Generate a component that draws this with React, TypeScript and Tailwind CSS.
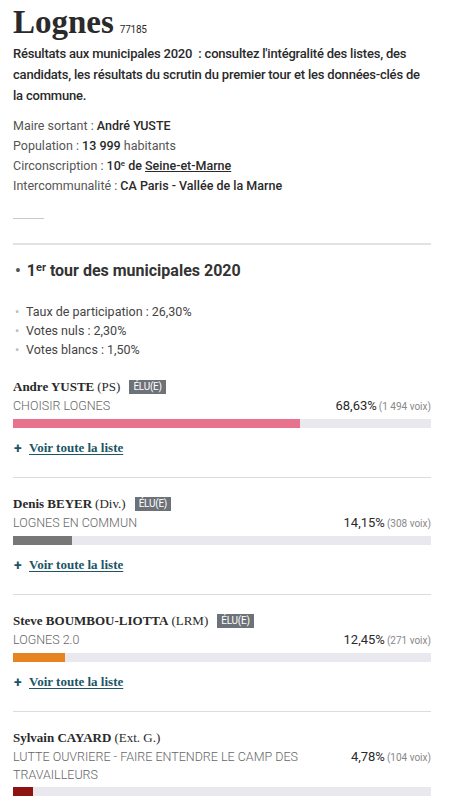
import React from "react";

const sans = { fontFamily: "Roboto, 'Liberation Sans', sans-serif" } as const;
const serif = { fontFamily: "'Liberation Serif', 'DejaVu Serif', serif" } as const;

type Cand = {
  name: string;
  party: string;
  elu: boolean;
  list: string;
  pct: string;
  voix: string;
  width: number;
  color: string;
  link: boolean;
};

const cands: Cand[] = [
  { name: "Andre YUSTE", party: "(PS)", elu: true, list: "CHOISIR LOGNES", pct: "68,63%", voix: "(1 494 voix)", width: 68.63, color: "#e8728c", link: true },
  { name: "Denis BEYER", party: "(Div.)", elu: true, list: "LOGNES EN COMMUN", pct: "14,15%", voix: "(308 voix)", width: 14.15, color: "#777777", link: true },
  { name: "Steve BOUMBOU-LIOTTA", party: "(LRM)", elu: true, list: "LOGNES 2.0", pct: "12,45%", voix: "(271 voix)", width: 12.45, color: "#e8841f", link: true },
  { name: "Sylvain CAYARD", party: "(Ext. G.)", elu: false, list: "LUTTE OUVRIERE - FAIRE ENTENDRE LE CAMP DES TRAVAILLEURS", pct: "4,78%", voix: "(104 voix)", width: 4.78, color: "#8e1414", link: false },
];

function Candidate({ c, first }: { c: Cand; first: boolean }) {
  return (
    <div className={first ? "pt-[19px]" : "border-t border-[#dcdcdc] pt-[17px]"}>
      <div className="flex items-center h-[18px]">
        <span style={serif} className="text-[13px] font-bold text-[#2a2a2a]">{c.name}</span>
        <span style={serif} className="text-[13px] text-[#2a2a2a] ml-[3px]">{c.party}</span>
        {c.elu && (
          <span style={sans} className="ml-[9px] bg-[#6d7178] text-white text-[10px] leading-[14px] px-[4px] tracking-tight">ÉLU(E)</span>
        )}
      </div>
      <div className="flex justify-between items-start mt-[1px]">
        <div style={sans} className="text-[12.5px] leading-[18px] text-[#666] font-light w-[300px]">{c.list}</div>
        <div style={sans} className="text-[13px] leading-[18px] text-[#2a2a2a] whitespace-nowrap">
          {c.pct}
          <span className="text-[10px] text-[#888] ml-[2px]">{c.voix}</span>
        </div>
      </div>
      <div className="h-[9px] bg-[#e8e8ee] mt-[3px]">
        <div className="h-full" style={{ width: `${c.width}%`, backgroundColor: c.color }} />
      </div>
      {c.link && (
        <div className="flex items-center h-[18px] mt-[11px] mb-[20px]">
          <span style={sans} className="text-[#1b5566] font-bold text-[14px] ml-[1px] w-[15px]">+</span>
          <span style={serif} className="text-[13px] font-bold text-[#1b5566] underline underline-offset-2">Voir toute la liste</span>
        </div>
      )}
    </div>
  );
}

export default function App() {
  return (
    <div className="w-[468px] h-[799px] overflow-hidden bg-white">
      <div className="pl-[13px] pr-[37px]">
        <div className="flex items-baseline pt-[2px]">
          <h1 style={serif} className="text-[33px] leading-[40px] font-bold text-[#2a2a2a]">Lognes</h1>
          <span style={sans} className="text-[10px] text-[#2a2a2a] ml-[6px] tracking-tight">77185</span>
        </div>
        <p style={sans} className="text-[13px] leading-[21px] font-medium text-[#2a2a2a] mt-[1px] tracking-[-0.2px]">
          Résultats aux municipales 2020&nbsp; : consultez l'intégralité des listes, des candidats, les résultats du scrutin du premier tour et les données-clés de la commune.
        </p>
        <div style={sans} className="mt-[10px] text-[12.5px] leading-[20px] text-[#555]">
          <div>Maire sortant : <span className="text-[#2a2a2a] font-medium">André YUSTE</span></div>
          <div>Population : <span className="text-[#2a2a2a] font-medium">13 999</span> habitants</div>
          <div>Circonscription : <span className="text-[#2a2a2a] font-medium">10<sup className="text-[8px]">e</sup> de <span className="underline">Seine-et-Marne</span></span></div>
          <div>Intercommunalité : <span className="text-[#2a2a2a] font-medium">CA Paris - Vallée de la Marne</span></div>
        </div>
        <div className="w-[31px] border-t border-[#c8c8c8] mt-[22px]" />
        <div className="border-t-2 border-[#e2e2e2] mt-[24px]" />
        <h2 style={sans} className="mt-[15px] text-[16px] leading-[22px] font-bold text-[#333] flex items-center">
          <span className="text-[#555] mr-[6px] ml-[2px]">•</span>
          <span>1<sup className="text-[11px]">er</sup> tour des municipales 2020</span>
        </h2>
        <ul style={sans} className="mt-[20px] text-[12.5px] leading-[19px] text-[#444]">
          {["Taux de participation : 26,30%", "Votes nuls : 2,30%", "Votes blancs : 1,50%"].map((t) => (
            <li key={t} className="flex">
              <span className="text-[#bbb] w-[13px] pl-[2px]">•</span>
              <span>{t}</span>
            </li>
          ))}
        </ul>
        <div className="w-[418px]">
          {cands.map((c, i) => (
            <Candidate key={c.name} c={c} first={i === 0} />
          ))}
        </div>
      </div>
    </div>
  );
}
